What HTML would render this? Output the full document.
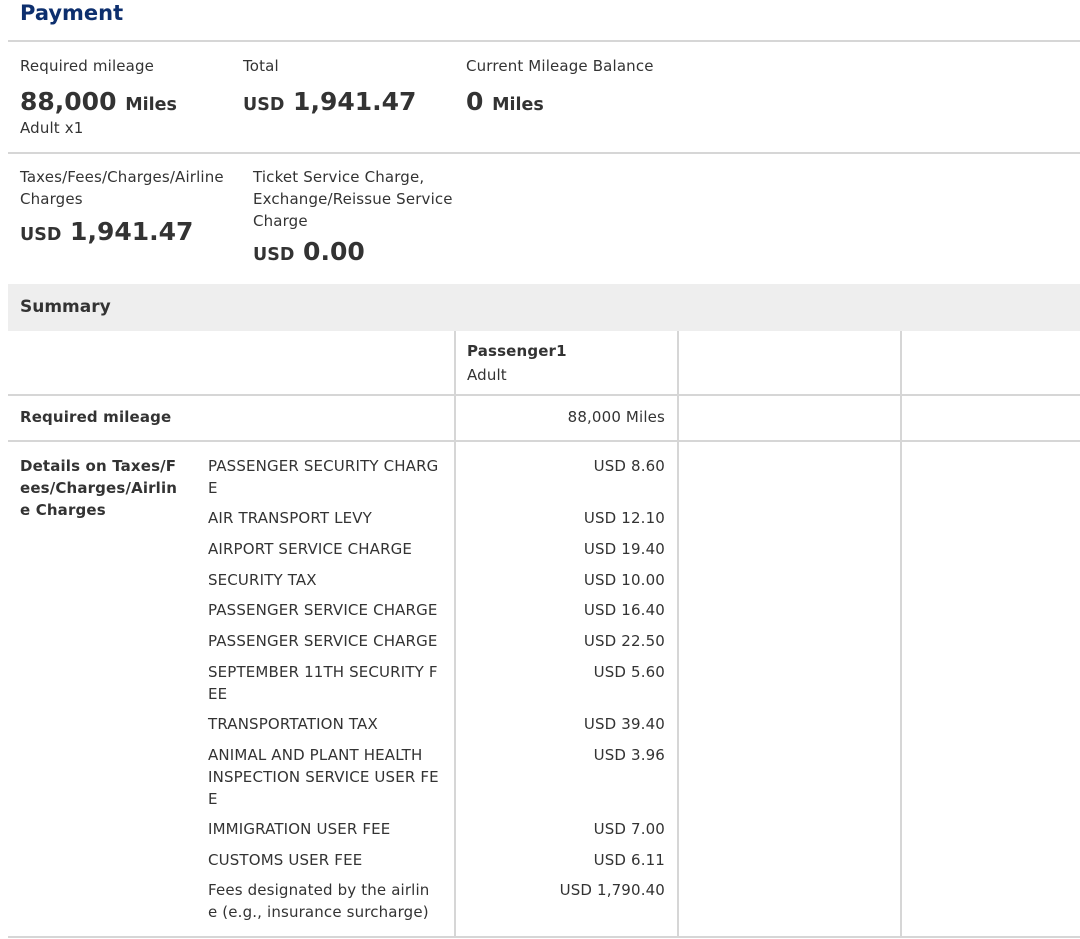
<!DOCTYPE html>
<html><head><meta charset="utf-8"><style>
body{margin:0;width:1080px;height:939px;background:#fff;font-family:"DejaVu Sans","Liberation Sans",sans-serif;color:#333;font-size:15px;letter-spacing:.15px;position:relative;overflow:hidden}
.a{position:absolute;white-space:nowrap;line-height:22px}
.h{position:absolute;background:#d6d6d6;height:2px}
.v{position:absolute;background:#d6d6d6;width:2px}
.b{font-weight:bold}
.big{font-weight:bold;font-size:25px;line-height:34px;letter-spacing:0}
.u{font-size:17.5px}
.r{text-align:right;width:200px}
</style></head><body>
<div class="a b" style="left:20px;top:-2px;font-size:21px;line-height:30px;color:#0d2f6e;letter-spacing:0">Payment</div>
<div class="h" style="left:8px;top:40px;width:1072px"></div>

<div class="a" style="left:20px;top:55px">Required mileage</div>
<div class="a big" style="left:20px;top:85px">88,000 <span class="u">Miles</span></div>
<div class="a" style="left:20px;top:117px">Adult x1</div>
<div class="a" style="left:243px;top:55px">Total</div>
<div class="a big" style="left:243px;top:85px"><span class="u">USD</span> 1,941.47</div>
<div class="a" style="left:466px;top:55px">Current Mileage Balance</div>
<div class="a big" style="left:466px;top:85px">0 <span class="u">Miles</span></div>
<div class="h" style="left:8px;top:152px;width:1072px"></div>

<div class="a" style="left:20px;top:166px">Taxes/Fees/Charges/Airline<br>Charges</div>
<div class="a big" style="left:20px;top:215px"><span class="u">USD</span> 1,941.47</div>
<div class="a" style="left:253px;top:166px">Ticket Service Charge,<br>Exchange/Reissue Service<br>Charge</div>
<div class="a big" style="left:253px;top:235px"><span class="u">USD</span> 0.00</div>

<div style="position:absolute;left:8px;top:284px;width:1072px;height:47px;background:#eeeeee"></div>
<div class="a b" style="left:20px;top:296px;font-size:17px;letter-spacing:0">Summary</div>

<div class="v" style="left:454px;top:331px;height:606px"></div>
<div class="v" style="left:677px;top:331px;height:606px"></div>
<div class="v" style="left:900px;top:331px;height:606px"></div>
<div class="h" style="left:8px;top:394px;width:1072px"></div>
<div class="h" style="left:8px;top:440px;width:1072px"></div>
<div class="h" style="left:8px;top:936px;width:1072px"></div>

<div class="a b" style="left:467px;top:340px">Passenger1</div>
<div class="a" style="left:467px;top:364px">Adult</div>
<div class="a b" style="left:20px;top:406px">Required mileage</div>
<div class="a r" style="left:465px;top:406px">88,000 Miles</div>

<div class="a b" style="left:20px;top:455px">Details on Taxes/F<br>ees/Charges/Airlin<br>e Charges</div>

<div class="a" style="left:208px;top:455px">PASSENGER SECURITY CHARG<br>E</div><div class="a r" style="left:465px;top:455px">USD 8.60</div>
<div class="a" style="left:208px;top:507px">AIR TRANSPORT LEVY</div><div class="a r" style="left:465px;top:507px">USD 12.10</div>
<div class="a" style="left:208px;top:538px">AIRPORT SERVICE CHARGE</div><div class="a r" style="left:465px;top:538px">USD 19.40</div>
<div class="a" style="left:208px;top:569px">SECURITY TAX</div><div class="a r" style="left:465px;top:569px">USD 10.00</div>
<div class="a" style="left:208px;top:599px">PASSENGER SERVICE CHARGE</div><div class="a r" style="left:465px;top:599px">USD 16.40</div>
<div class="a" style="left:208px;top:630px">PASSENGER SERVICE CHARGE</div><div class="a r" style="left:465px;top:630px">USD 22.50</div>
<div class="a" style="left:208px;top:661px">SEPTEMBER 11TH SECURITY F<br>EE</div><div class="a r" style="left:465px;top:661px">USD 5.60</div>
<div class="a" style="left:208px;top:713px">TRANSPORTATION TAX</div><div class="a r" style="left:465px;top:713px">USD 39.40</div>
<div class="a" style="left:208px;top:744px">ANIMAL AND PLANT HEALTH<br>INSPECTION SERVICE USER FE<br>E</div><div class="a r" style="left:465px;top:744px">USD 3.96</div>
<div class="a" style="left:208px;top:818px">IMMIGRATION USER FEE</div><div class="a r" style="left:465px;top:818px">USD 7.00</div>
<div class="a" style="left:208px;top:849px">CUSTOMS USER FEE</div><div class="a r" style="left:465px;top:849px">USD 6.11</div>
<div class="a" style="left:208px;top:879px">Fees designated by the airlin<br>e (e.g., insurance surcharge)</div><div class="a r" style="left:465px;top:879px">USD 1,790.40</div>
</body></html>
